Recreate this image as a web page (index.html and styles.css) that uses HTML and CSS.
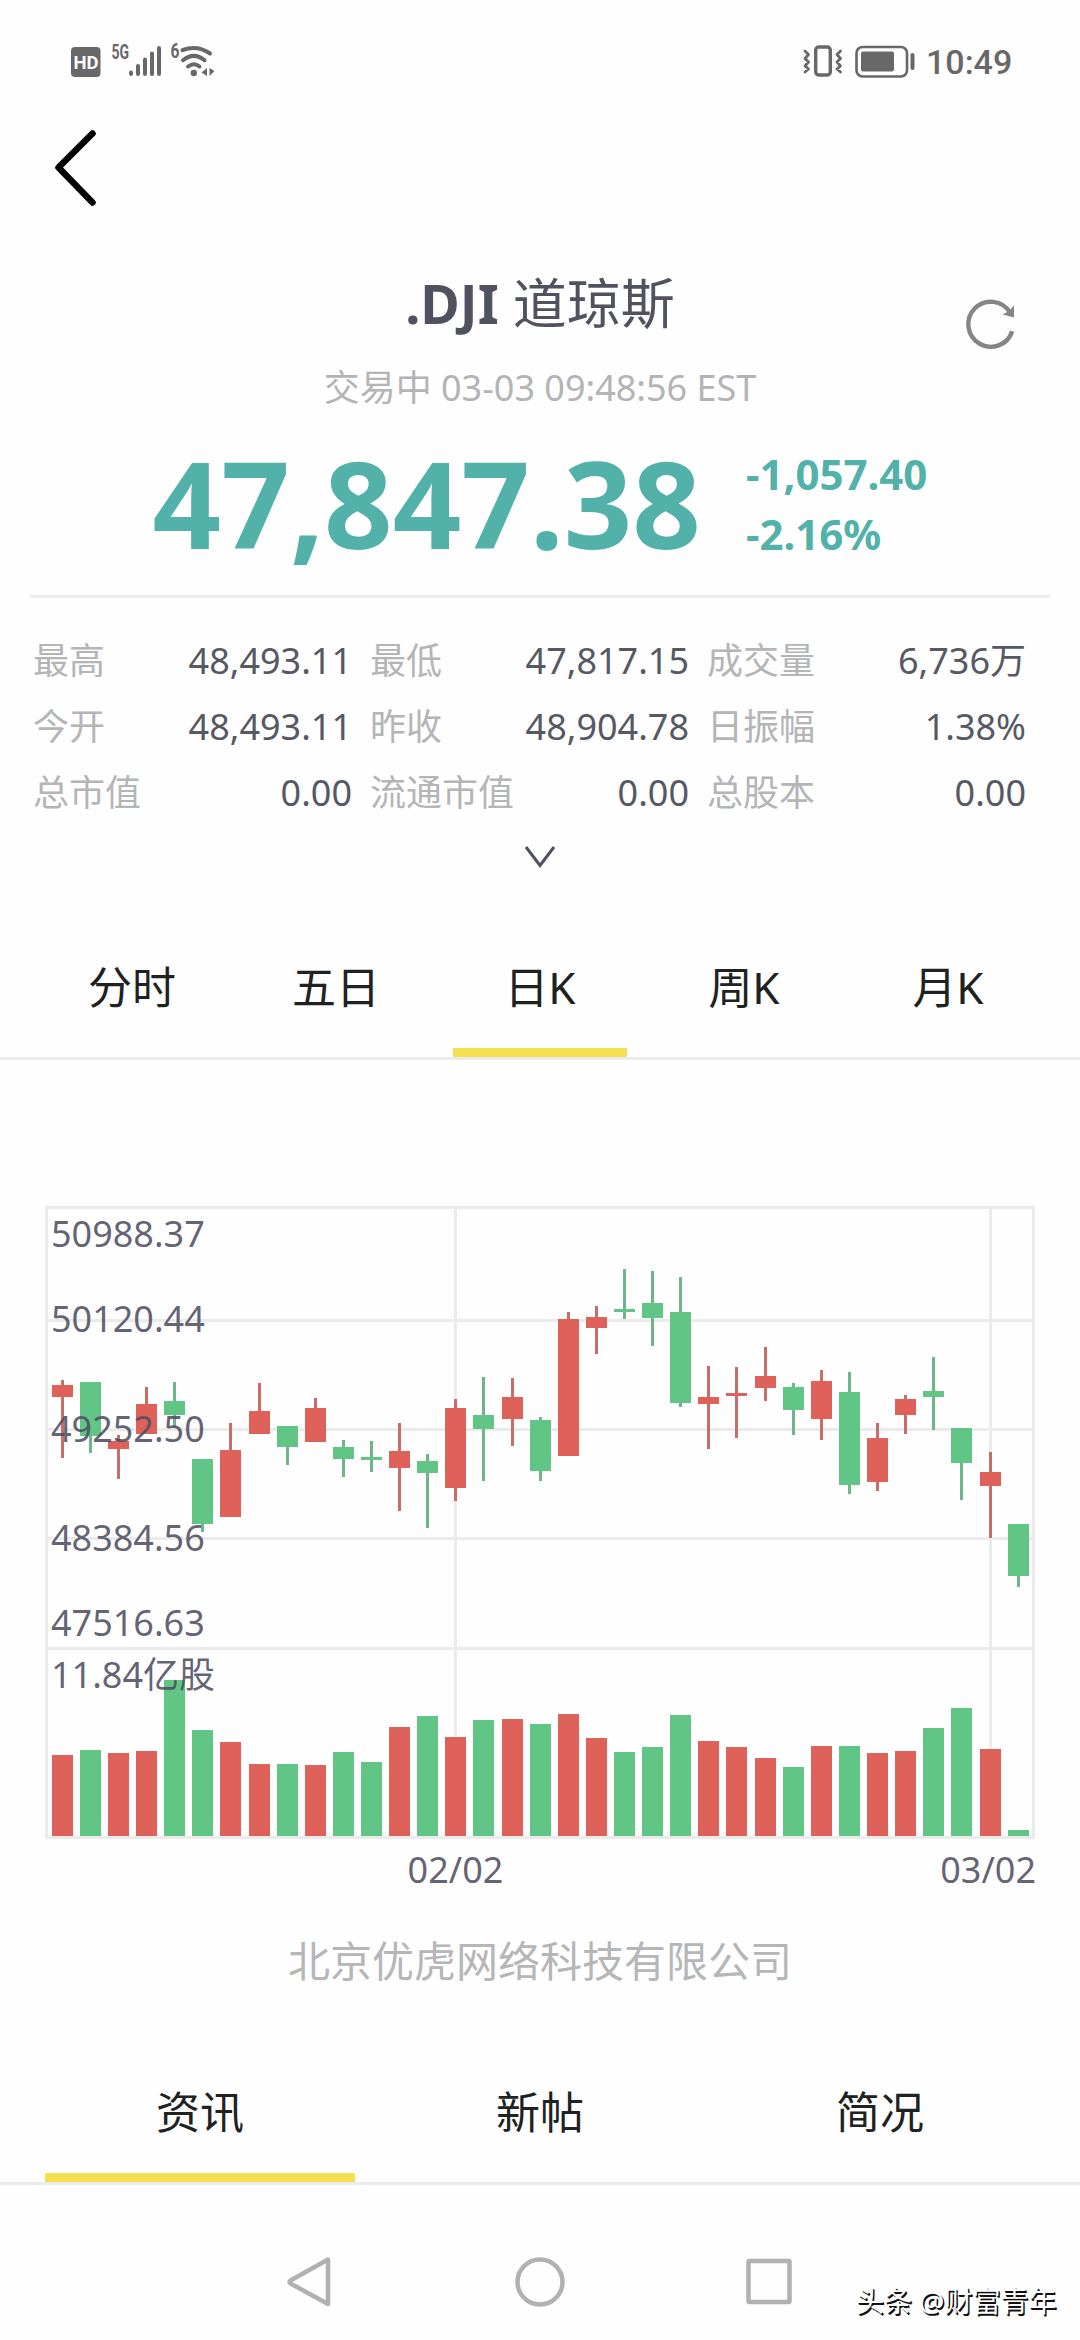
FILE: index.html
```html
<!DOCTYPE html>
<html lang="zh-CN">
<head>
<meta charset="utf-8">
<title>.DJI 道琼斯</title>
<link rel="stylesheet" href="styles.css">
</head>
<body>
<div class="screen">
  <header class="status">
    <svg class="status-left" viewBox="0 0 150 40" width="150" height="40">
      <rect x="3" y="7" width="29.500" height="30" rx="4" fill="#686868"/>
      <text class="hd" x="5.500" y="28.500" textLength="25" lengthAdjust="spacingAndGlyphs">HD</text>
      <text class="sup" x="43.500" y="19.200" textLength="17.500" lengthAdjust="spacingAndGlyphs">5G</text>
      <path d="M63 34v-1.500M70 34v-8M77 34v-14.500M84 34v-20.500M91 34v-26" stroke="#686868" stroke-width="4" stroke-linecap="round"/>
      <text class="sup" x="102.500" y="18.200" textLength="9" lengthAdjust="spacingAndGlyphs">6</text>
      <path d="M114.500 10.200Q129 4.500 142 13.500M115 20.200Q126 11.500 136.500 20.200M120 26.500Q126 22 131.500 26.500" fill="none" stroke="#686868" stroke-width="4" stroke-linecap="round"/>
      <circle cx="125.800" cy="33" r="3.200" fill="#686868"/>
      <path d="M133.500 32.500L139 28v8zM146.500 31L141.500 28v8z" fill="#686868"/>
    </svg>
    <div class="status-right">
      <svg viewBox="0 0 116 40" width="116" height="40" fill="none" stroke="#686868">
        <rect x="15.700" y="7" width="14.600" height="28" rx="3" stroke-width="3.400"/>
        <path d="M5 11l3.500 3.500-3.500 4 3.500 3.500-3.500 4 3.500 3-3.500 3M40.500 11l-3.500 3.500 3.500 4-3.500 3.500 3.500 4-3.500 3 3.500 3" stroke-width="2.800" stroke-linejoin="round" stroke-linecap="round"/>
        <rect x="56.500" y="7" width="50.500" height="29.500" rx="6" stroke-width="2.600"/>
        <rect x="61" y="11.500" width="33" height="20" rx="2" fill="#686868" stroke="none"/>
        <path d="M112.500 15v13" stroke-width="4" stroke-linecap="round"/>
      </svg>
      <span class="clock">10:49</span>
    </div>
  </header>

  <nav class="topbar">
    <svg viewBox="0 0 50 80" width="50" height="80"><path d="M44.500 5.500L10.500 39.500L44.500 74.500" fill="none" stroke="#000" stroke-width="6.500" stroke-linecap="round" stroke-linejoin="round"/></svg>
  </nav>

  <section class="quote">
    <div class="title-row">
      <h1 class="title"><b>.DJI</b> 道琼斯</h1>
      <svg class="refresh" viewBox="0 0 60 56" width="60" height="56"><path d="M52.200 35.200A22.500 22.500 0 1 1 50 16.500" fill="none" stroke="#848686" stroke-width="4.400"/><path d="M42.500 18.500L49 15L54 9.500v12z" fill="#848686"/></svg>
    </div>
    <p class="session">交易中 03-03 09:48:56 EST</p>
    <div class="price-row">
      <span class="price">47,847.38</span>
      <span class="change"><span>-1,057.40</span><span>-2.16%</span></span>
    </div>
    <div class="stats">
      <div class="stat"><span>最高</span><b>48,493.11</b></div>
      <div class="stat"><span>最低</span><b>47,817.15</b></div>
      <div class="stat"><span>成交量</span><b>6,736万</b></div>
      <div class="stat"><span>今开</span><b>48,493.11</b></div>
      <div class="stat"><span>昨收</span><b>48,904.78</b></div>
      <div class="stat"><span>日振幅</span><b>1.38%</b></div>
      <div class="stat"><span>总市值</span><b>0.00</b></div>
      <div class="stat"><span>流通市值</span><b>0.00</b></div>
      <div class="stat"><span>总股本</span><b>0.00</b></div>
    </div>
    <svg class="expand" viewBox="0 0 32 24" width="32" height="24"><path d="M2 2L16 20.500L30 2" fill="none" stroke="#50535f" stroke-width="3"/></svg>
  </section>

  <div class="tabs period">
    <span class="tab">分时</span><span class="tab">五日</span><span class="tab active">日K</span><span class="tab">周K</span><span class="tab">月K</span>
  </div>

  <svg class="chart" viewBox="0 1190 1080 710" width="1080" height="710">
    <g class="grid">
      <rect x="46.500" y="1207.500" width="987" height="630"/>
      <path d="M48 1320.500H1032M48 1429.500H1032M48 1538.500H1032M48 1648.500H1032M455.500 1209V1836M990.500 1209V1836"/>
    </g>
    <g id="candles"></g>
    <g class="axis">
      <text x="51" y="1247">50988.37</text>
      <text x="51" y="1332">50120.44</text>
      <text x="51" y="1442">49252.50</text>
      <text x="51" y="1551">48384.56</text>
      <text x="51" y="1636">47516.63</text>
      <text x="51" y="1688">11.84亿股</text>
      <text x="455.500" y="1883" text-anchor="middle">02/02</text>
      <text x="1036" y="1883" text-anchor="end">03/02</text>
    </g>
  </svg>

  <p class="company">北京优虎网络科技有限公司</p>

  <div class="tabs feed">
    <span class="tab active">资讯</span><span class="tab">新帖</span><span class="tab">简况</span>
  </div>

  <footer class="navbar">
    <svg viewBox="0 0 520 60" width="520" height="60" fill="none" stroke="#b1b1b1" stroke-width="4.500" stroke-linejoin="round">
      <path d="M48 7.500V52L10.500 31.500Q8.500 30 10.500 28.500z"/>
      <circle cx="260" cy="30" r="22.500"/>
      <rect x="468.500" y="9" width="41" height="41" rx="1"/>
    </svg>
    <span class="credit">头条 @财富青年</span>
  </footer>
</div>
<script src="chart.js"></script>
</body>
</html>
```

FILE: styles.css
```css
* { box-sizing: border-box; margin: 0; padding: 0; }

body {
  width: 1080px;
  background: #fefefe;
  font-family: "Noto Sans", "Noto Sans CJK SC", sans-serif;
  color: #50535f;
}

.screen {
  height: 2340px;
  display: flex;
  flex-direction: column;
  overflow: hidden;
}

svg { display: block; flex: none; }

.status {
  height: 120px;
  padding: 40px 70px 0 68px;
  display: flex;
  justify-content: space-between;
}

.hd { font: bold 19px Roboto, sans-serif; fill: #fff; }
.sup { font: bold 20px Roboto, sans-serif; fill: #686868; }

.status-right { display: flex; gap: 10px; }

.clock {
  width: 84px;
  font: 500 34px/44px Roboto, sans-serif;
  color: #686868;
  white-space: nowrap;
}

.topbar { height: 120px; padding: 8px 48px; }

.quote { height: 660px; display: flex; flex-direction: column; }

.title-row {
  height: 110px;
  display: grid;
  grid-template-columns: 120px 1fr 120px;
  padding-top: 25px;
}

.title {
  grid-column: 2;
  text-align: center;
  font-size: 54px;
  line-height: 76px;
  font-weight: 400;
}

.refresh { margin-top: 31px; }

.session {
  text-align: center;
  font-size: 36px;
  line-height: 76px;
  color: #b4b4b6;
}

.price-row {
  height: 172px;
  margin: 0 30px;
  padding-top: 2px;
  display: flex;
  justify-content: center;
  gap: 45px;
  border-bottom: 3px solid #ececec;
  color: #52b2aa;
  font-weight: 700;
}

.price { font-size: 120px; line-height: 150px; }

.change {
  display: flex;
  flex-direction: column;
  font-size: 42px;
  line-height: 60px;
  padding-top: 16px;
}

.stats {
  margin: 30px 54px 0 33px;
  display: grid;
  grid-template-columns: repeat(3, 319px);
  grid-auto-rows: 66px;
  column-gap: 18px;
  font-size: 36px;
  line-height: 66px;
  white-space: nowrap;
}

.stat { display: flex; justify-content: space-between; }
.stat span { color: #b4b5b7; }
.stat b { font-weight: 400; color: #565963; }

.expand { margin: 19px auto 0; }

.tabs {
  display: flex;
  padding: 0 30px;
  border-bottom: 3px solid #ebebeb;
}

.tab {
  flex: 1;
  display: flex;
  flex-direction: column;
  justify-content: flex-end;
  text-align: center;
  font-size: 44px;
  line-height: 60px;
  color: #202222;
}

.tab::after { content: ""; height: 9px; margin: 31px 15px 0; }
.tab.active::after { background: #f6e052; }

.period { height: 160px; }
.chart { margin-top: 130px; }

.grid rect, .grid path { fill: none; stroke: #ebebeb; stroke-width: 3; }
.up { fill: #df625a; }
.down { fill: #60c585; }
.wick.up { fill: #c86d68; }
.wick.down { fill: #6fb58c; }
.axis text { font-size: 36px; fill: #4e4f62; fill-opacity: 0.88; }

.company {
  text-align: center;
  font-size: 42px;
  line-height: 60px;
  margin-top: 31px;
  color: #b4b6b8;
}

.feed { height: 194px; }

.navbar {
  flex: 1;
  display: grid;
  grid-template-columns: 280px 520px 280px;
  padding-top: 67px;
}

.navbar svg { grid-column: 2; }

.credit {
  grid-column: 3;
  padding: 31px 0 0 56px;
  font-size: 28px;
  line-height: 36px;
  color: #fff;
  white-space: nowrap;
  text-shadow: 1.5px 1.5px 0 #111, 1px 1px 0 #111;
}
```

FILE: chart.js
```js
// Each row: direction, x, high, body top, body bottom, low, volume top
const rows = [
  ["up", 52, 1380, 1385, 1397, 1458, 1755],
  ["down", 80, 1382, 1382, 1436, 1453, 1750],
  ["up", 108, 1435, 1441, 1449, 1479, 1753],
  ["up", 136, 1387, 1404, 1434, 1434, 1751],
  ["down", 164, 1382, 1401, 1415, 1427, 1680],
  ["down", 192, 1459, 1459, 1524, 1532, 1730],
  ["up", 220, 1423, 1450, 1517, 1517, 1742],
  ["up", 249, 1383, 1411, 1434, 1434, 1764],
  ["down", 277, 1426, 1426, 1447, 1465, 1764],
  ["up", 305, 1398, 1408, 1442, 1442, 1765],
  ["down", 333, 1440, 1447, 1459, 1477, 1752],
  ["down", 361, 1441, 1457, 1460, 1472, 1762],
  ["up", 389, 1423, 1451, 1468, 1511, 1727],
  ["down", 417, 1454, 1461, 1473, 1528, 1716],
  ["up", 445, 1399, 1408, 1488, 1501, 1737],
  ["down", 473, 1377, 1415, 1429, 1481, 1720],
  ["up", 502, 1378, 1397, 1419, 1446, 1719],
  ["down", 530, 1417, 1420, 1471, 1481, 1724],
  ["up", 558, 1312, 1319, 1456, 1456, 1714],
  ["up", 586, 1306, 1317, 1328, 1354, 1738],
  ["down", 614, 1269, 1309, 1312, 1319, 1752],
  ["down", 642, 1271, 1303, 1318, 1346, 1747],
  ["down", 670, 1277, 1312, 1403, 1407, 1715],
  ["up", 698, 1366, 1397, 1404, 1449, 1741],
  ["up", 726, 1367, 1393, 1396, 1438, 1747],
  ["up", 755, 1347, 1376, 1388, 1401, 1758],
  ["down", 783, 1383, 1387, 1410, 1435, 1767],
  ["up", 811, 1370, 1381, 1419, 1440, 1746],
  ["down", 839, 1372, 1392, 1485, 1494, 1746],
  ["up", 867, 1423, 1438, 1482, 1491, 1753],
  ["up", 895, 1395, 1399, 1415, 1434, 1751],
  ["down", 923, 1357, 1391, 1397, 1430, 1728],
  ["down", 951, 1428, 1428, 1463, 1500, 1708],
  ["up", 980, 1452, 1472, 1486, 1538, 1749],
  ["down", 1008, 1524, 1524, 1576, 1587, 1830]
];
const BASE = 1836;
const rect = (cls, x, y, w, h) =>
  `<rect class="${cls}" x="${x}" y="${y}" width="${w}" height="${h}"/>`;

document.getElementById("candles").innerHTML = rows.map(([dir, x, hi, top, bot, lo, vol]) =>
  rect(`wick ${dir}`, x + 9, hi, 3, lo - hi) +
  rect(dir, x, top, 21, bot - top) +
  rect(dir, x, vol, 21, BASE - vol)
).join("");
```
